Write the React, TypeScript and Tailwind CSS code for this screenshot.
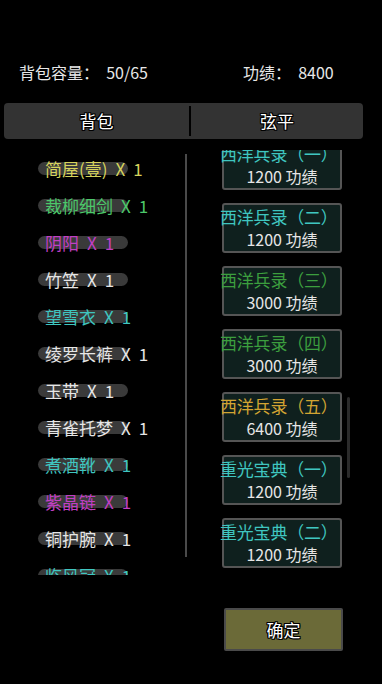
import React from "react";

const font = { fontFamily: '"Noto Sans CJK SC", "Noto Sans", sans-serif' };

const items: { name: string; color: string }[] = [
  { name: "简屋(壹)", color: "text-[#d6d35c]" },
  { name: "裁柳细剑", color: "text-[#4cc86a]" },
  { name: "阴阳", color: "text-[#c13fc4]" },
  { name: "竹笠", color: "text-[#e6e6e6]" },
  { name: "望雪衣", color: "text-[#3fc6c0]" },
  { name: "绫罗长裤", color: "text-[#e6e6e6]" },
  { name: "玉带", color: "text-[#e6e6e6]" },
  { name: "青雀托梦", color: "text-[#e6e6e6]" },
  { name: "煮酒靴", color: "text-[#3fc6c0]" },
  { name: "紫晶链", color: "text-[#c13fc4]" },
  { name: "铜护腕", color: "text-[#e6e6e6]" },
  { name: "临风冠", color: "text-[#3fc6c0]" },
];

const cards: { title: string; cost: string; color: string }[] = [
  { title: "西洋兵录（一）", cost: "1200 功绩", color: "text-[#3fc6c0]" },
  { title: "西洋兵录（二）", cost: "1200 功绩", color: "text-[#3fc6c0]" },
  { title: "西洋兵录（三）", cost: "3000 功绩", color: "text-[#3c9e3e]" },
  { title: "西洋兵录（四）", cost: "3000 功绩", color: "text-[#3c9e3e]" },
  { title: "西洋兵录（五）", cost: "6400 功绩", color: "text-[#d2a432]" },
  { title: "重光宝典（一）", cost: "1200 功绩", color: "text-[#3fc6c0]" },
  { title: "重光宝典（二）", cost: "1200 功绩", color: "text-[#3fc6c0]" },
];

const outline =
  "[text-shadow:1px_1px_0_#000,-1px_-1px_0_#000,1px_-1px_0_#000,-1px_1px_0_#000,0_1px_0_#000,0_-1px_0_#000,1px_0_0_#000,-1px_0_0_#000]";

export default function App() {
  return (
    <div className="w-[382px] h-[684px] bg-black overflow-hidden text-[#e8e8e8]" style={font}>
      {/* header */}
      <div className="flex pt-[60px] h-[84px] text-[16px] leading-[24px]">
        <div className="pl-[19px] w-[243px]">背包容量：&nbsp;&nbsp;50/65</div>
        <div>功绩：&nbsp;&nbsp;8400</div>
      </div>

      {/* tabs */}
      <div className="mt-[19px] ml-[4px] w-[359px] h-[36px] bg-[#333333] rounded-[4px] flex items-center">
        <div className={`flex-1 text-center text-[17px] text-white ${outline}`}>背包</div>
        <div className="w-[2px] h-[30px] bg-black" />
        <div className={`w-[172px] text-center text-[17px] text-white ${outline}`}>弦平</div>
      </div>

      {/* content */}
      <div className="mt-[11px] h-[425px] flex">
        {/* left list */}
        <div className="w-[185px] h-full overflow-hidden">
          {items.map((it) => (
            <div key={it.name} className="relative h-[37px] flex items-center">
              <div className="absolute left-[38px] top-[12px] w-[90px] h-[13px] rounded-full bg-[#3a3a3a]" />
              <div className={`relative pl-[45px] text-[17px] leading-[20px] whitespace-nowrap ${it.color}`}>
                {it.name}
                <span className="ml-[8px]">X</span>
                <span className="ml-[8px]">1</span>
              </div>
            </div>
          ))}
        </div>
        {/* left scroll line */}
        <div className="w-[2px] mt-[4px] h-[403px] bg-[#4a4a4a]" />

        {/* right list */}
        <div className="w-[160px] h-full overflow-hidden relative">
          <div className="mt-[-10px] flex flex-col gap-[13px] pl-[35px]">
            {cards.map((c) => (
              <div
                key={c.title}
                className="w-[120px] h-[50px] border-2 border-[#555555] rounded-[3px] bg-[#0f201e] relative"
              >
                <div
                  className={`absolute left-[-4px] top-[1px] whitespace-nowrap text-[17px] leading-[22px] tracking-[-0.2px] ${c.color}`}
                >
                  {c.title}
                </div>
                <div className="absolute left-0 right-0 top-[24px] text-center text-[16px] leading-[20px] text-[#e6e6e6]">
                  {c.cost}
                </div>
              </div>
            ))}
          </div>
        </div>
        {/* right scroll thumb */}
        <div className="w-[3px] mt-[247px] h-[81px] rounded-full bg-[#2b2b2b]" />
      </div>

      {/* confirm button */}
      <div className="mt-[33px] ml-[224px] w-[119px] h-[43px] border-2 border-[#4a4a4a] rounded-[2px] bg-[#6b6a38] flex items-center justify-center">
        <span className={`text-[17px] text-white ${outline}`}>确定</span>
      </div>
    </div>
  );
}
